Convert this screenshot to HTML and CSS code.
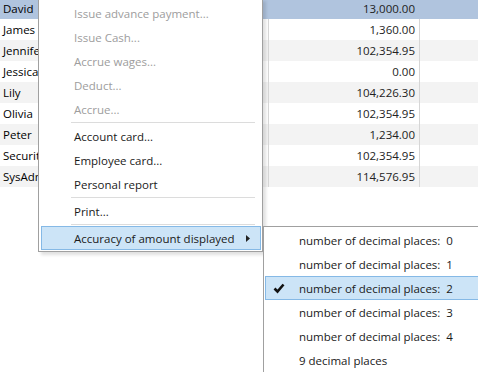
FILE: index.html
```html
<!DOCTYPE html>
<html>
  <head>
    <meta charset="utf-8">
    <title>Employees</title>
    <link rel="stylesheet" href="styles.css">
  </head>
  <body>
    <div class="screen">
      <!-- Employee grid behind the menus -->
      <div class="grid">
        <div class="row selected"><div class="name">David</div><div class="amount">13,000.00</div><div class="rest"></div></div>
        <div class="row"><div class="name">James</div><div class="amount">1,360.00</div><div class="rest"></div></div>
        <div class="row alt"><div class="name">Jennifer</div><div class="amount">102,354.95</div><div class="rest"></div></div>
        <div class="row"><div class="name">Jessica</div><div class="amount">0.00</div><div class="rest"></div></div>
        <div class="row alt"><div class="name">Lily</div><div class="amount">104,226.30</div><div class="rest"></div></div>
        <div class="row"><div class="name">Olivia</div><div class="amount">102,354.95</div><div class="rest"></div></div>
        <div class="row alt"><div class="name">Peter</div><div class="amount">1,234.00</div><div class="rest"></div></div>
        <div class="row"><div class="name">Security</div><div class="amount">102,354.95</div><div class="rest"></div></div>
        <div class="row alt"><div class="name">SysAdmin</div><div class="amount">114,576.95</div><div class="rest"></div></div>
      </div>

      <!-- Context menu -->
      <div class="menu">
        <div class="item disabled">Issue advance payment...</div>
        <div class="item disabled">Issue Cash...</div>
        <div class="item disabled">Accrue wages...</div>
        <div class="item disabled">Deduct...</div>
        <div class="item disabled">Accrue...</div>
        <div class="sep"></div>
        <div class="item">Account card...</div>
        <div class="item">Employee card...</div>
        <div class="item">Personal report</div>
        <div class="sep"></div>
        <div class="item">Print...</div>
        <div class="sep"></div>
        <div class="item active">
          Accuracy of amount displayed
          <svg class="arrow" width="4" height="7" viewBox="0 0 4 7"><polygon points="0,0 4,3.5 0,7" fill="#222"/></svg>
        </div>
      </div>

      <!-- Sub menu -->
      <div class="menu submenu">
        <div class="item">number of decimal places:&nbsp; 0</div>
        <div class="item">number of decimal places:&nbsp; 1</div>
        <div class="item active">
          <svg class="check" width="12" height="11" viewBox="0 0 12 11"><polyline points="1.5,5.5 4.5,8.5 10.5,1.5" fill="none" stroke="#111" stroke-width="2.6"/></svg>
          number of decimal places:&nbsp; 2
        </div>
        <div class="item">number of decimal places:&nbsp; 3</div>
        <div class="item">number of decimal places:&nbsp; 4</div>
        <div class="item">9 decimal places</div>
      </div>
    </div>
  </body>
</html>
```

FILE: styles.css
```css
/* Basic reset */
body {
  margin: 0;
  padding: 0;
  background: #fff;
  font-family: "Open Sans", "Noto Sans", sans-serif;
  font-size: 11.5px;
  color: #1a1a1a;
}
.screen {
  position: relative;
  width: 478px;
  height: 372px;
  overflow: hidden;
}
/* Grid rows */
.grid {
  margin-top: -2px;
}
.row {
  display: flex;
  height: 21px;
  line-height: 21px;
  background: #fff;
}
.row.alt {
  background: #f3f3f3;
}
.row.selected {
  background: #b0c4de;
}
.name {
  box-sizing: border-box;
  width: 269px;
  padding-left: 3px;
  border-right: 1px solid #d6d6d6;
  color: #000;
}
.amount {
  box-sizing: border-box;
  width: 151px;
  padding-right: 4px;
  text-align: right;
  border-right: 1px solid #d6d6d6;
  color: #222;
}
.selected .name,
.selected .amount {
  border-right-color: #b0c4de;
}
.rest {
  flex: 1;
}
/* Popup menus */
.menu {
  position: absolute;
  left: 38px;
  top: -2px;
  box-sizing: border-box;
  width: 225px;
  padding: 2px 1px 1px 1px;
  background: #fff;
  border: 1px solid #a0a0a0;
  box-shadow: 3px 3px 3px rgba(0,0,0,0.12);
  color: #1a1a1a;
}
.item {
  position: relative;
  box-sizing: border-box;
  height: 24px;
  line-height: 24px;
  padding-left: 32px;
  margin-left: 1px;
  border: 1px solid transparent;
  white-space: nowrap;
}
.item.disabled {
  color: #9d9d9d;
}
.item.active {
  background: #cce4f7;
  border-color: #85b9e6;
}
.sep {
  height: 1px;
  margin: 1px 6px 1px 31px;
  background: #dcdcdc;
}
.arrow {
  position: absolute;
  right: 10px;
  top: 8px;
}
/* Second level menu */
.submenu {
  left: 263px;
  top: 226px;
  width: 218px;
  height: 160px;
  padding: 1px 1px;
  border-right: none;
}
.submenu .item {
  margin-left: 0;
  padding-left: 33px;
}
.check {
  position: absolute;
  left: 7px;
  top: 6px;
}
```
